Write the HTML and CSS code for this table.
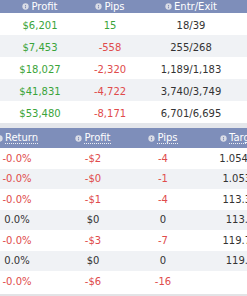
FILE: index.html
```html
<!DOCTYPE html>
<html>
<head>
<meta charset="utf-8">
<link rel="stylesheet" href="styles.css">
</head>
<body>
<div class="screen">
  <table class="grid summary">
    <colgroup><col class="s1"><col class="s2"><col class="s3"></colgroup>
    <thead>
      <tr>
        <th><span class="label"><svg class="info" viewBox="0 0 8 8"><circle cx="4" cy="4" r="3.6"/><path d="M3.4 2.2h1.2v1.1H3.4zM3.4 3.9h1.2v2H3.4z"/></svg>Profit</span></th>
        <th><span class="label"><svg class="info" viewBox="0 0 8 8"><circle cx="4" cy="4" r="3.6"/><path d="M3.4 2.2h1.2v1.1H3.4zM3.4 3.9h1.2v2H3.4z"/></svg>Pips</span></th>
        <th class="wide"><span class="label"><svg class="info" viewBox="0 0 8 8"><circle cx="4" cy="4" r="3.6"/><path d="M3.4 2.2h1.2v1.1H3.4zM3.4 3.9h1.2v2H3.4z"/></svg>Entr/Exit</span></th>
      </tr>
    </thead>
    <tbody>
      <tr><td class="pos">$6,201</td><td class="pos">15</td><td class="wide">18/39</td></tr>
      <tr><td class="pos">$7,453</td><td class="neg">-558</td><td class="wide">255/268</td></tr>
      <tr><td class="pos">$18,027</td><td class="neg">-2,320</td><td class="wide">1,189/1,183</td></tr>
      <tr><td class="pos">$41,831</td><td class="neg">-4,722</td><td class="wide">3,740/3,749</td></tr>
      <tr><td class="pos">$53,480</td><td class="neg">-8,171</td><td class="wide">6,701/6,695</td></tr>
    </tbody>
  </table>
  <div class="divider"></div>
  <div class="clip">
    <table class="grid trades">
      <colgroup><col class="t1"><col class="t2"><col class="t3"><col class="t4"></colgroup>
      <thead>
        <tr>
          <th><span class="label"><svg class="info" viewBox="0 0 8 8"><circle cx="4" cy="4" r="3.6"/><path d="M3.4 2.2h1.2v1.1H3.4zM3.4 3.9h1.2v2H3.4z"/></svg><span class="dotted">Return</span></span></th>
          <th><span class="label"><svg class="info" viewBox="0 0 8 8"><circle cx="4" cy="4" r="3.6"/><path d="M3.4 2.2h1.2v1.1H3.4zM3.4 3.9h1.2v2H3.4z"/></svg><span class="dotted">Profit</span></span></th>
          <th><span class="label"><svg class="info" viewBox="0 0 8 8"><circle cx="4" cy="4" r="3.6"/><path d="M3.4 2.2h1.2v1.1H3.4zM3.4 3.9h1.2v2H3.4z"/></svg><span class="dotted">Pips</span></span></th>
          <th><span class="label"><svg class="info" viewBox="0 0 8 8"><circle cx="4" cy="4" r="3.6"/><path d="M3.4 2.2h1.2v1.1H3.4zM3.4 3.9h1.2v2H3.4z"/></svg><span class="dotted">Target</span></span></th>
        </tr>
      </thead>
      <tbody>
        <tr><td class="neg">-0.0%</td><td class="neg">-$2</td><td class="neg">-4</td><td>1.05468</td></tr>
        <tr><td class="neg">-0.0%</td><td class="neg">-$0</td><td class="neg">-1</td><td>1.0539</td></tr>
        <tr><td class="neg">-0.0%</td><td class="neg">-$1</td><td class="neg">-4</td><td>113.35</td></tr>
        <tr><td>0.0%</td><td>$0</td><td>0</td><td>113.2</td></tr>
        <tr><td class="neg">-0.0%</td><td class="neg">-$3</td><td class="neg">-7</td><td>119.72</td></tr>
        <tr><td>0.0%</td><td>$0</td><td>0</td><td>119.3</td></tr>
        <tr><td class="neg">-0.0%</td><td class="neg">-$6</td><td class="neg">-16</td><td></td></tr>
      </tbody>
    </table>
  </div>
  <div class="footer"></div>
</div>
</body>
</html>
```

FILE: styles.css
```css
html, body {
  margin: 0;
  padding: 0;
  background: #ffffff;
}
.screen {
  width: 247px;
  height: 296px;
  overflow: hidden;
  display: flex;
  flex-direction: column;
  font-family: "DejaVu Sans", Verdana, sans-serif;
  font-size: 10px;
  color: #333333;
}
.grid {
  border-collapse: collapse;
  table-layout: fixed;
}
.grid th {
  background: #7e8eba;
  color: #ffffff;
  font-weight: normal;
  text-align: center;
  padding: 0;
  white-space: nowrap;
}
.grid td {
  text-align: center;
  padding: 0;
  white-space: nowrap;
}
.grid tbody tr:nth-child(even) td {
  background: #f0f2f5;
}
.label {
  display: inline-flex;
  align-items: center;
  gap: 2px;
}
.info {
  width: 7px;
  height: 7px;
  flex: none;
}
.info circle {
  fill: #d9dce6;
}
.info path {
  fill: #8591b8;
}
.summary {
  width: 247px;
}
.summary .s1 { width: 80px; }
.summary .s2 { width: 60px; }
.summary .s3 { width: 107px; }
.summary th { height: 13px; }
.summary td { height: 20px; padding-top: 2px; }
.summary .wide { padding-right: 5px; }
.divider {
  height: 5px;
  background: #e4e6eb;
  flex: none;
}
.clip {
  overflow: hidden;
  flex: none;
}
.trades {
  width: 306px;
  margin-left: -30px;
}
.trades .t1 { width: 94px; }
.trades .t2 { width: 58px; }
.trades .t3 { width: 82px; }
.trades .t4 { width: 72px; }
.trades th { height: 20px; }
.trades td { height: 20.5px; }
.dotted {
  border-bottom: 1px dotted rgba(255, 255, 255, 0.85);
  line-height: 11px;
}
.pos { color: #3aa43a; }
.neg { color: #e04b4b; }
.footer {
  margin-top: 2px;
  flex: 1;
  border-top: 3px solid #e2e3e6;
  background: repeating-linear-gradient(45deg, #c6c7ca 0 1px, #d0d1d4 1px 3px);
}
```
